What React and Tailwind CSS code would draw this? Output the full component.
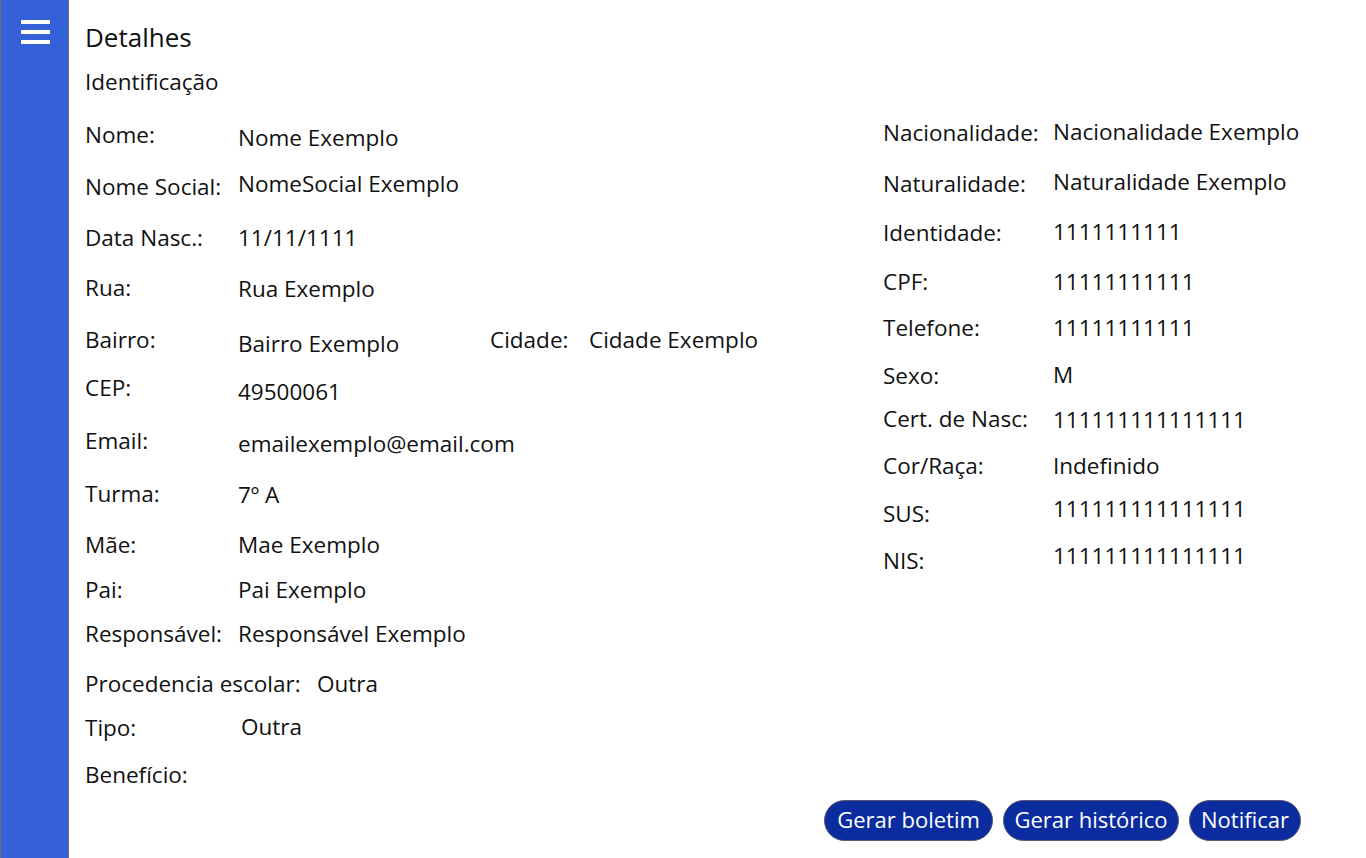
import React from "react";

const font = { fontFamily: '"Open Sans", "Noto Sans", sans-serif' };

function LRow({ h, label, value, lm = 0, vm = 0 }) {
  return (
    <div className="flex items-start" style={{ height: h }}>
      <div className="w-[153px] shrink-0 whitespace-nowrap" style={{ marginTop: lm }}>{label}</div>
      <div className="whitespace-nowrap" style={{ marginTop: vm }}>{value}</div>
    </div>
  );
}

function RRow({ h, label, value, lm = 0, vm = 0 }) {
  return (
    <div className="flex items-start" style={{ height: h }}>
      <div className="w-[170px] shrink-0 whitespace-nowrap" style={{ marginTop: lm }}>{label}</div>
      <div className="whitespace-nowrap" style={{ marginTop: vm }}>{value}</div>
    </div>
  );
}

export default function App() {
  return (
    <div className="flex h-[858px] w-full overflow-hidden bg-white text-[22.5px] leading-[30px] text-[#111]" style={font}>
      <aside className="w-[69px] shrink-0 border-x border-[#6e6e6e] bg-[#3460d8]">
        <svg width="67" height="60" viewBox="0 0 67 60" className="block">
          <rect x="20" y="20" width="29" height="4" fill="#fff" />
          <rect x="20" y="30" width="29" height="4" fill="#fff" />
          <rect x="20" y="40" width="29" height="4" fill="#fff" />
        </svg>
      </aside>
      <main className="flex flex-1 flex-col pl-[16px]">
        <h1 className="mt-[20px] text-[26px] leading-[34px]">Detalhes</h1>
        <h2 className="mt-[13px] leading-[30px]">Identificação</h2>
        <div className="mt-[20px] flex items-start">
          <div className="mt-[3px] flex w-[798px] shrink-0 flex-col">
            <LRow h={49} label="Nome:" value="Nome Exemplo" vm={3} />
            <LRow h={54} label="Nome Social:" value="NomeSocial Exemplo" lm={3} />
            <LRow h={50} label="Data Nasc.:" value="11/11/1111" />
            <LRow h={52} label="Rua:" value="Rua Exemplo" vm={1} />
            <div className="flex items-start" style={{ height: 48 }}>
              <div className="w-[153px] shrink-0">Bairro:</div>
              <div className="mt-[4px] w-[252px] shrink-0 whitespace-nowrap">Bairro Exemplo</div>
              <div className="w-[99px] shrink-0">Cidade:</div>
              <div className="whitespace-nowrap">Cidade Exemplo</div>
            </div>
            <LRow h={53} label="CEP:" value="49500061" vm={4} />
            <LRow h={53} label="Email:" value="emailexemplo@email.com" vm={3} />
            <LRow h={51} label="Turma:" value="7º A" vm={1} />
            <LRow h={45} label="Mãe:" value="Mae Exemplo" />
            <LRow h={44} label="Pai:" value="Pai Exemplo" />
            <LRow h={50} label="Responsável:" value="Responsável Exemplo" />
            <div className="flex items-start" style={{ height: 43 }}>
              <div className="w-[232px] shrink-0 whitespace-nowrap">Procedencia escolar:</div>
              <div>Outra</div>
            </div>
            <div className="flex items-start" style={{ height: 48 }}>
              <div className="mt-[1px] w-[156px] shrink-0">Tipo:</div>
              <div>Outra</div>
            </div>
            <div className="h-[30px]">Benefício:</div>
          </div>
          <div className="flex flex-col">
            <RRow h={50} label="Nacionalidade:" value="Nacionalidade Exemplo" lm={1} />
            <RRow h={50} label="Naturalidade:" value="Naturalidade Exemplo" lm={2} />
            <RRow h={50} label="Identidade:" value="1111111111" lm={1} />
            <RRow h={46} label="CPF:" value="11111111111" />
            <RRow h={47} label="Telefone:" value="11111111111" />
            <RRow h={44} label="Sexo:" value="M" lm={1} />
            <RRow h={47} label="Cert. de Nasc:" value="111111111111111" vm={1} />
            <RRow h={43} label="Cor/Raça:" value="Indefinido" />
            <RRow h={47} label="SUS:" value="111111111111111" lm={5} />
            <RRow h={30} label="NIS:" value="111111111111111" lm={5} />
          </div>
        </div>
        <div className="mt-[10px] flex justify-end gap-[10px] pr-[65px]">
          <button className="h-[41px] w-[169px] whitespace-nowrap rounded-full border border-[#5a5a6a] bg-[#0a2c9e] pb-[3px] text-[22px] leading-[30px] text-white">Gerar boletim</button>
          <button className="h-[41px] w-[176px] whitespace-nowrap rounded-full border border-[#5a5a6a] bg-[#0a2c9e] pb-[3px] text-[22px] leading-[30px] text-white">Gerar histórico</button>
          <button className="h-[41px] w-[112px] whitespace-nowrap rounded-full border border-[#5a5a6a] bg-[#0a2c9e] pb-[3px] text-[22px] leading-[30px] text-white">Notificar</button>
        </div>
      </main>
    </div>
  );
}
